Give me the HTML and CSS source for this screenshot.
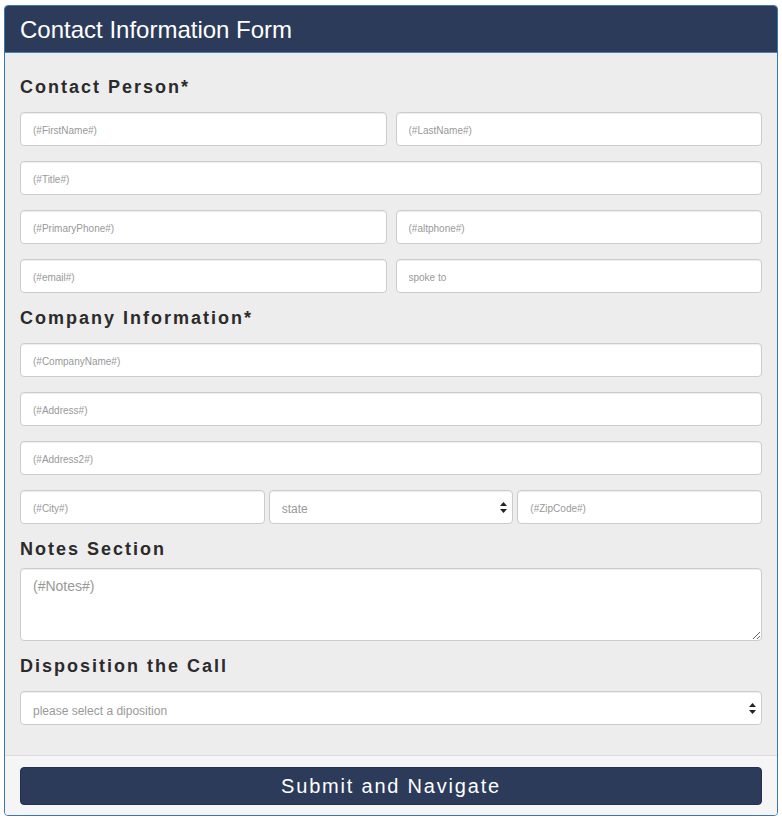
FILE: index.html
```html
<!DOCTYPE html>
<html lang="en">
<head>
  <meta charset="UTF-8">
  <title>Contact Information Form</title>
  <meta name="viewport" content="width=device-width, initial-scale=1.0">
  <link rel="stylesheet" href="styles.css">
</head>
<body>
  <div class="panel">
    <div class="panel-heading">
      <h3 class="panel-title">Contact Information Form</h3>
    </div>

    <div class="panel-body">
      <h4 class="section-title first">Contact Person*</h4>
      <div class="row two">
        <input class="field" type="text" placeholder="(#FirstName#)">
        <input class="field" type="text" placeholder="(#LastName#)">
      </div>
      <div class="row">
        <input class="field" type="text" placeholder="(#Title#)">
      </div>
      <div class="row two">
        <input class="field" type="text" placeholder="(#PrimaryPhone#)">
        <input class="field" type="text" placeholder="(#altphone#)">
      </div>
      <div class="row two">
        <input class="field" type="text" placeholder="(#email#)">
        <input class="field" type="text" placeholder="spoke to">
      </div>

      <h4 class="section-title">Company Information*</h4>
      <div class="row">
        <input class="field" type="text" placeholder="(#CompanyName#)">
      </div>
      <div class="row">
        <input class="field" type="text" placeholder="(#Address#)">
      </div>
      <div class="row">
        <input class="field" type="text" placeholder="(#Address2#)">
      </div>
      <div class="row three">
        <input class="field" type="text" placeholder="(#City#)">
        <div class="select-wrap">
          <select class="field select">
            <option>state</option>
          </select>
          <svg class="select-arrow" width="7" height="11" viewBox="0 0 7 11"><path d="M3.5 0 L7 4 L0 4 Z M0 7 L7 7 L3.5 11 Z" fill="#222"/></svg>
        </div>
        <input class="field" type="text" placeholder="(#ZipCode#)">
      </div>

      <h4 class="section-title notes">Notes Section</h4>
      <div class="row">
        <textarea class="field notes-box" placeholder="(#Notes#)"></textarea>
      </div>

      <h4 class="section-title">Disposition the Call</h4>
      <div class="row">
        <div class="select-wrap">
          <select class="field select small">
            <option>please select a diposition</option>
          </select>
          <svg class="select-arrow" width="7" height="11" viewBox="0 0 7 11"><path d="M3.5 0 L7 4 L0 4 Z M0 7 L7 7 L3.5 11 Z" fill="#222"/></svg>
        </div>
      </div>
    </div>

    <div class="panel-footer">
      <button class="submit-btn" type="button">Submit and Navigate</button>
    </div>
  </div>
</body>
</html>
```

FILE: styles.css
```css
* {
  box-sizing: border-box;
}

body {
  margin: 0;
  padding: 5px 4px;
  font-family: "Liberation Sans", Arial, sans-serif;
  background-color: #ffffff;
  color: #333;
}

.panel {
  border: 1px solid #3a78b2;
  border-radius: 4px;
  background-color: #ededed;
  overflow: hidden;
}

.panel-heading {
  background-color: #2d3b5a;
  border-bottom: 1px solid #4a7fb3;
  padding: 10px 15px 9px;
}

.panel-title {
  margin: 0;
  font-size: 24px;
  font-weight: normal;
  line-height: 27px;
  color: #ffffff;
}

.panel-body {
  padding: 15px 15px 15px;
}

.section-title {
  margin: 0 0 15px;
  font-size: 18px;
  font-weight: bold;
  line-height: 20px;
  letter-spacing: 2px;
  color: #2b2b2b;
}

.section-title.first {
  margin-top: 9px;
}

.section-title.notes {
  margin-bottom: 9px;
}

.row {
  display: grid;
  grid-template-columns: 1fr;
  margin-bottom: 15px;
}

.row.two {
  grid-template-columns: 1fr 1fr;
  column-gap: 9px;
}

.row.three {
  grid-template-columns: 1fr 1fr 1fr;
  column-gap: 4px;
}

.field {
  display: block;
  width: 100%;
  height: 34px;
  padding: 2px 12px 0;
  font-family: "Liberation Sans", Arial, sans-serif;
  font-size: 10px;
  color: #555;
  background-color: #ffffff;
  border: 1px solid #cccccc;
  border-radius: 4px;
  box-shadow: inset 0 1px 1px rgba(0, 0, 0, 0.075);
  outline: none;
}

.field::placeholder {
  color: #999;
}

.select-wrap {
  position: relative;
  min-width: 0;
}

.select {
  appearance: none;
  -webkit-appearance: none;
  font-size: 12px;
  color: #999;
  padding-top: 4px;
}

.select.small {
  padding-top: 5px;
}

.select-arrow {
  position: absolute;
  right: 6px;
  top: 12px;
  pointer-events: none;
}

.notes-box {
  height: 73px;
  padding: 9px 12px 7px;
  font-size: 14px;
  resize: vertical;
}

.panel-footer {
  background-color: #f5f5f5;
  border-top: 1px solid #dddddd;
  padding: 11px 15px 10px;
}

.submit-btn {
  display: block;
  width: 100%;
  height: 38px;
  border: 1px solid #243150;
  border-radius: 4px;
  background-color: #2d3b5a;
  color: #ffffff;
  font-family: "Liberation Sans", Arial, sans-serif;
  font-size: 20px;
  letter-spacing: 1.8px;
  cursor: pointer;
}
```
